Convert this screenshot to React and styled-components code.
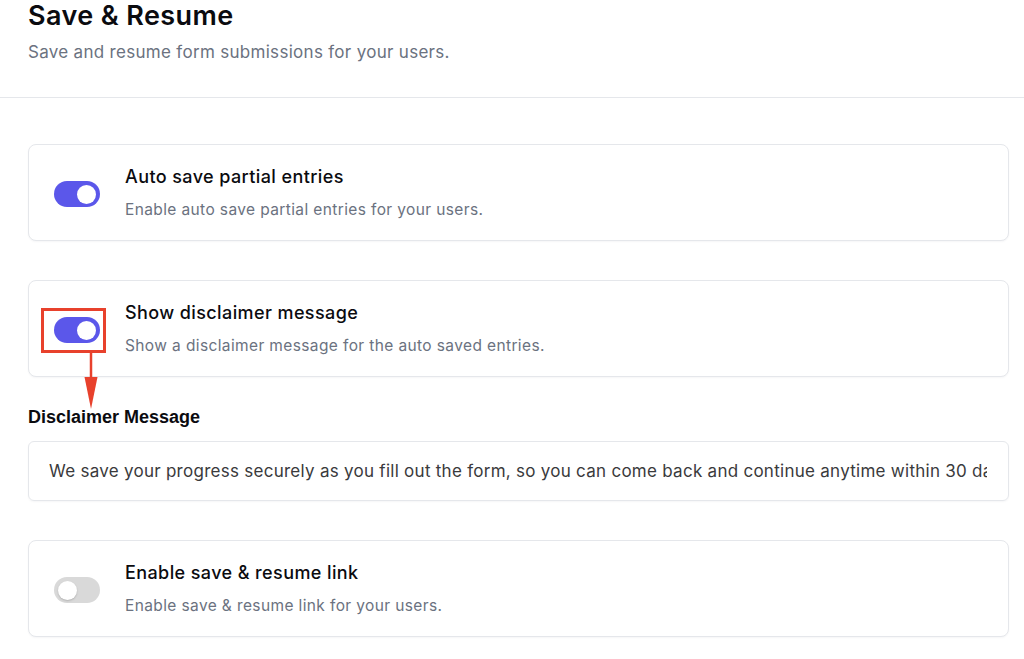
import React from "react";
import styled, { createGlobalStyle } from "styled-components";

const Global = createGlobalStyle`
  html, body { margin: 0; padding: 0; background: #ffffff; }
  body { font-family: Inter, "Noto Sans", sans-serif; color: #111827; overflow: hidden; }
  * { box-sizing: border-box; }
`;

const Page = styled.div`
  width: 1024px;
  height: 659px;
  overflow: hidden;
`;

const Header = styled.header`
  padding: 0 28px 0 28px;
  height: 98px;
  border-bottom: 1px solid #e5e7eb;
`;

const Title = styled.h1`
  margin: 0;
  font-size: 27px;
  line-height: 32px;
  font-weight: 600;
  color: #0b0b0f;
  letter-spacing: 0.4px;
`;

const Subtitle = styled.p`
  margin: 9px 0 0;
  font-size: 17px;
  line-height: 22px;
  color: #6b7280;
  letter-spacing: 0.3px;
`;

const Content = styled.main`
  padding: 46px 15px 0 28px;
  display: flex;
  flex-direction: column;
`;

const Card = styled.section`
  height: 97px;
  border: 1px solid #e5e7eb;
  border-radius: 8px;
  box-shadow: 0 1px 2px rgba(16, 24, 40, 0.04);
  background: #fff;
  display: flex;
  align-items: center;
  gap: 25px;
  padding: 0 25px;
  margin-bottom: ${(p) => p.$mb ?? 39}px;
`;

const ToggleWrap = styled.div`
  position: relative;
  flex: none;
  display: flex;
  margin-top: 3px;
`;

const Track = styled.span`
  width: 46px;
  height: 26px;
  border-radius: 13px;
  background: ${(p) => (p.$on ? "#5b57ea" : "#d9d9d9")};
  display: flex;
  align-items: center;
  justify-content: ${(p) => (p.$on ? "flex-end" : "flex-start")};
  padding: 0 4px;
`;

const Knob = styled.span`
  width: 19px;
  height: 19px;
  border-radius: 50%;
  background: #fff;
  box-shadow: ${(p) => (p.$on ? "none" : "0 1px 2px rgba(0,0,0,0.18)")};
`;

const Highlight = styled.span`
  position: absolute;
  left: -13px;
  top: -9px;
  width: 65px;
  height: 45px;
  border: 3px solid #e8412c;
  pointer-events: none;
`;

const Arrow = styled.svg`
  position: absolute;
  left: 30px;
  top: 36px;
  overflow: visible;
`;

const Texts = styled.div`
  display: flex;
  flex-direction: column;
  gap: 11px;
`;

const CardTitle = styled.div`
  font-size: 18px;
  line-height: 24px;
  font-weight: 500;
  color: #0b0b0f;
  letter-spacing: 0.4px;
`;

const CardDesc = styled.div`
  font-size: 15.5px;
  line-height: 20px;
  color: #6b7280;
  letter-spacing: 0.38px;
`;

const FieldLabel = styled.label`
  font-family: "Liberation Sans", Arial, sans-serif;
  font-weight: 700;
  font-size: 18px;
  line-height: 20px;
  color: #0b0b0f;
  margin-bottom: 14px;
`;

const Input = styled.div`
  height: 60px;
  border: 1px solid #e5e7eb;
  border-radius: 6px;
  box-shadow: 0 1px 2px rgba(16, 24, 40, 0.04);
  padding: 0 21px 0 20px;
  display: flex;
  align-items: center;
  overflow: hidden;
  white-space: nowrap;
  font-size: 17px;
  color: #3a3a3c;
  margin-bottom: 39px;
`;

const InputText = styled.span`
  overflow: hidden;
  display: block;
  width: 100%;
  letter-spacing: 0.27px;
`;

function Toggle({ on, annotated }) {
  return (
    <ToggleWrap>
      <Track $on={on}>
        <Knob $on={on} />
      </Track>
      {annotated && (
        <>
          <Highlight />
          <Arrow width="14" height="56" viewBox="0 0 14 56">
            <line x1="7" y1="0" x2="7" y2="30" stroke="#e8412c" strokeWidth="2.5" />
            <polygon points="0.5,24 13.5,24 7,56" fill="#e8412c" />
          </Arrow>
        </>
      )}
    </ToggleWrap>
  );
}

function SettingCard({ on, annotated, title, desc, mb }) {
  return (
    <Card $mb={mb}>
      <Toggle on={on} annotated={annotated} />
      <Texts>
        <CardTitle>{title}</CardTitle>
        <CardDesc>{desc}</CardDesc>
      </Texts>
    </Card>
  );
}

export default function App() {
  return (
    <Page>
      <Global />
      <Header>
        <Title>Save &amp; Resume</Title>
        <Subtitle>Save and resume form submissions for your users.</Subtitle>
      </Header>
      <Content>
        <SettingCard
          on
          title="Auto save partial entries"
          desc="Enable auto save partial entries for your users."
        />
        <SettingCard
          on
          annotated
          title="Show disclaimer message"
          desc="Show a disclaimer message for the auto saved entries."
          mb={30}
        />
        <FieldLabel>Disclaimer Message</FieldLabel>
        <Input>
          <InputText>
            We save your progress securely as you fill out the form, so you can come back and continue anytime within 30 days.
          </InputText>
        </Input>
        <SettingCard
          title="Enable save & resume link"
          desc="Enable save & resume link for your users."
        />
      </Content>
    </Page>
  );
}
